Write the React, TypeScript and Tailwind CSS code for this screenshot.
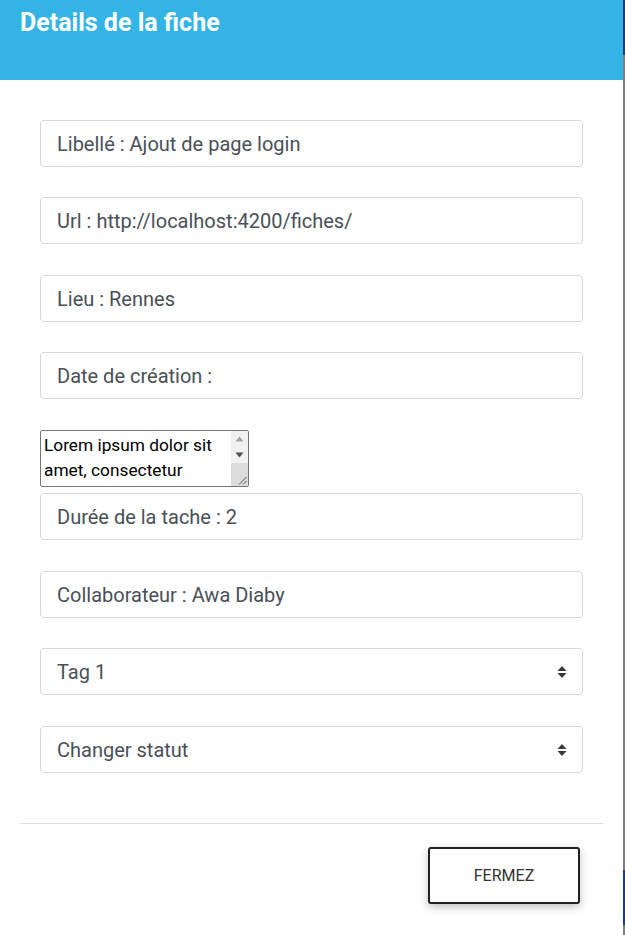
import React from 'react';

function Field({ label }: { label: string }) {
  return (
    <div className="h-[47px] w-full rounded-[4px] border border-[#d5d8dc] bg-white px-4 flex items-center text-[20px] text-[#495057]">
      {label}
    </div>
  );
}

function SelectField({ label }: { label: string }) {
  return (
    <div className="h-[47px] w-full rounded-[4px] border border-[#d5d8dc] bg-white pl-4 pr-[15px] flex items-center justify-between text-[20px] text-[#495057]">
      <span>{label}</span>
      <svg width="10" height="14" viewBox="0 0 10 14">
        <path d="M5 1 L9.5 6 H0.5 Z" fill="#343a40" />
        <path d="M5 13 L9.5 8 H0.5 Z" fill="#343a40" />
      </svg>
    </div>
  );
}

function FakeTextarea() {
  return (
    <div className="flex h-[57px] w-[209px] overflow-hidden rounded-[2px] border border-[#767676] bg-white">
      <div className="flex-1 overflow-hidden px-[3px] pt-[2px] text-[17.3px] leading-[25px] text-black">
        Lorem ipsum dolor sit amet, consectetur
      </div>
      <div className="flex w-[17px] flex-col bg-[#f1f1f1]">
        <div className="flex h-[16px] items-center justify-center">
          <svg width="9" height="6" viewBox="0 0 9 6">
            <path d="M4.5 0.5 L8.5 5.5 H0.5 Z" fill="#a3a3a3" />
          </svg>
        </div>
        <div className="flex h-[16px] items-center justify-center">
          <svg width="9" height="6" viewBox="0 0 9 6">
            <path d="M4.5 5.5 L8.5 0.5 H0.5 Z" fill="#505050" />
          </svg>
        </div>
        <div className="relative flex-1 bg-[#dcdcdc]">
          <svg className="absolute bottom-[1px] right-[1px]" width="9" height="9" viewBox="0 0 9 9">
            <path d="M8.5 1 L1 8.5 M8.5 5 L5 8.5" stroke="#555" strokeWidth="1" />
          </svg>
        </div>
      </div>
    </div>
  );
}

export default function App() {
  return (
    <div className="flex h-[935px] w-[625px] bg-white" style={{ fontFamily: 'Roboto, "Liberation Sans", sans-serif' }}>
      <div className="flex w-[623px] flex-col">
        {/* Header */}
        <div className="h-[80px] bg-[#34b4e4] px-5 pt-[7px]">
          <h1 className="text-[25px] font-bold leading-[32px] text-white">Details de la fiche</h1>
        </div>

        {/* Body */}
        <div className="flex flex-col px-10 pt-10">
          <div className="mb-[30px]">
            <Field label="Libellé : Ajout de page login" />
          </div>
          <div className="mb-[31px]">
            <Field label="Url : http://localhost:4200/fiches/" />
          </div>
          <div className="mb-[30px]">
            <Field label="Lieu : Rennes" />
          </div>
          <div className="mb-[31px]">
            <Field label="Date de création :" />
          </div>
          <FakeTextarea />
          <div className="mt-[6px] mb-[31px]">
            <Field label="Durée de la tache : 2" />
          </div>
          <div className="mb-[30px]">
            <Field label="Collaborateur : Awa Diaby" />
          </div>
          <div className="mb-[31px]">
            <SelectField label="Tag 1" />
          </div>
          <SelectField label="Changer statut" />
        </div>

        {/* Footer */}
        <div className="mx-5 mt-[50px] border-t border-[#e0e0e0]" />
        <div className="flex justify-end pr-[43px] pt-[23px]">
          <button className="h-[57px] w-[152px] rounded-[3px] border-2 border-[#222] bg-white text-[16px] text-[#333] shadow-[0_3px_8px_rgba(0,0,0,0.25)]">
            FERMEZ
          </button>
        </div>
      </div>

      {/* backdrop sliver */}
      <div className="flex w-[2px] flex-col bg-[#7f7f7f]">
        <div className="h-[55px] bg-[#1c3d78]" />
        <div className="flex-1" />
        <div className="h-[55px] bg-[#1c3d78]" />
        <div className="h-[10px]" />
      </div>
    </div>
  );
}
